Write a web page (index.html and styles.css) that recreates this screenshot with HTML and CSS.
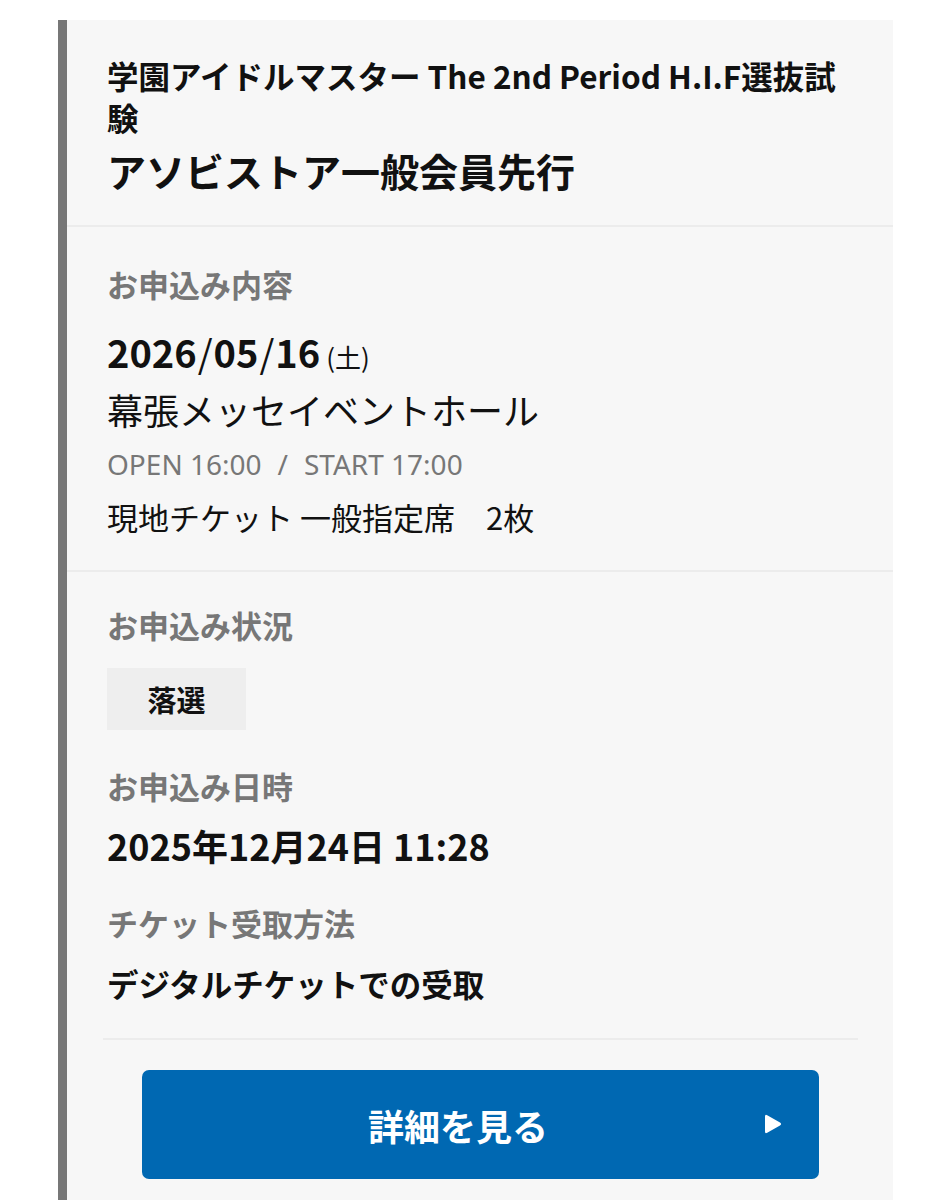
FILE: index.html
```html
<!DOCTYPE html>
<html lang="ja">
<head>
<meta charset="utf-8">
<link rel="stylesheet" href="styles.css">
</head>
<body>
<div class="card">
  <section class="sec head">
    <div class="event">学園アイドルマスター The 2nd Period H.I.F選抜試験</div>
    <div class="lottery">アソビストア一般会員先行</div>
  </section>
  <section class="sec">
    <div class="label">お申込み内容</div>
    <div class="date"><span class="num">2026</span><span class="sl">/</span><span class="num">05</span><span class="sl">/</span><span class="num">16</span><span class="wd">(土)</span></div>
    <div class="venue">幕張メッセイベントホール</div>
    <div class="time">OPEN 16:00<span class="tsl">/</span>START 17:00</div>
    <div class="seat">現地チケット 一般指定席　2枚</div>
  </section>
  <section class="sec last">
    <div class="label">お申込み状況</div>
    <div class="badge">落選</div>
    <div class="label gap">お申込み日時</div>
    <div class="applied">2025年12月24日 11:28</div>
    <div class="label gap2">チケット受取方法</div>
    <div class="method">デジタルチケットでの受取</div>
    <div class="rule"></div>
    <a class="btn" href="#"><span>詳細を見る</span><svg class="arrow" width="18" height="20" viewBox="0 0 18 20"><path d="M1 2.6 L1 17.4 Q1 20 3.2 18.7 L16 11.4 Q18.2 10 16 8.6 L3.2 1.3 Q1 0 1 2.6 Z" fill="#fff"/></svg></a>
  </section>
</div>
</body>
</html>
```
FILE: styles.css
```css
html, body {
  margin: 0;
  padding: 0;
  background: #ffffff;
}
body {
  font-family: "Noto Sans CJK JP", "Noto Sans", sans-serif;
  color: #111;
}
.card {
  margin: 20px 0 0 58px;
  width: 826px;
  min-height: 1200px;
  background: #f7f7f7;
  border-left: 9px solid #777777;
}
.sec {
  padding: 0 35px 0 40px;
  border-bottom: 2px solid #ececec;
}
.sec.last {
  border-bottom: none;
  padding-left: 36px;
}
.sec.last > :not(.rule):not(.btn) {
  margin-left: 4px;
}
.head {
  padding-top: 34px;
  padding-bottom: 29px;
}
.event {
  font-size: 31.5px;
  font-weight: 700;
  line-height: 42px;
  margin-right: 20px;
}
.lottery {
  font-size: 39px;
  font-weight: 700;
  line-height: 52px;
  margin-top: 6px;
}
.sec:not(.head) {
  padding-top: 37px;
}
.sec:nth-child(2) {
  padding-bottom: 31px;
}
.sec.last {
  padding-top: 33px;
}
.label {
  font-size: 31px;
  font-weight: 700;
  color: #777777;
  line-height: 40px;
}
.date {
  margin-top: 22px;
  line-height: 52px;
  font-size: 38px;
  font-weight: 700;
}
.date .sl {
  font-weight: 400;
  margin: 0 1px;
}
.date .wd {
  font-size: 26px;
  font-weight: 400;
  margin-left: 6px;
}
.venue {
  font-size: 36px;
  line-height: 52px;
}
.time {
  font-family: "Noto Sans", sans-serif;
  font-size: 28px;
  line-height: 40px;
  color: #777777;
  margin-top: 9px;
}
.tsl {
  margin: 0 16px;
}
.seat {
  font-size: 31px;
  line-height: 44px;
  margin-top: 11px;
}
.badge {
  display: inline-flex;
  align-items: center;
  justify-content: center;
  width: 139px;
  height: 62px;
  margin-top: 23px;
  background: #eeeeee;
  font-size: 29px;
  font-weight: 700;
}
.gap {
  display: block;
  margin-top: 36px;
}
.applied {
  font-size: 36px;
  font-weight: 700;
  line-height: 48px;
  margin-top: 15px;
}
.gap2 {
  margin-top: 34px;
}
.method {
  font-size: 31.5px;
  font-weight: 700;
  line-height: 44px;
  margin-top: 18px;
}
.rule {
  height: 2px;
  background: #ececec;
  margin-top: 33px;
}
.btn {
  position: relative;
  display: flex;
  align-items: center;
  justify-content: center;
  box-sizing: border-box;
  height: 109px;
  margin: 30px 39px 0 39px;
  padding-right: 45px;
  background: #0068b2;
  border-radius: 7px;
  color: #ffffff;
  text-decoration: none;
  font-size: 36px;
  font-weight: 700;
}
.arrow {
  position: absolute;
  right: 37px;
  top: 44px;
}
```
